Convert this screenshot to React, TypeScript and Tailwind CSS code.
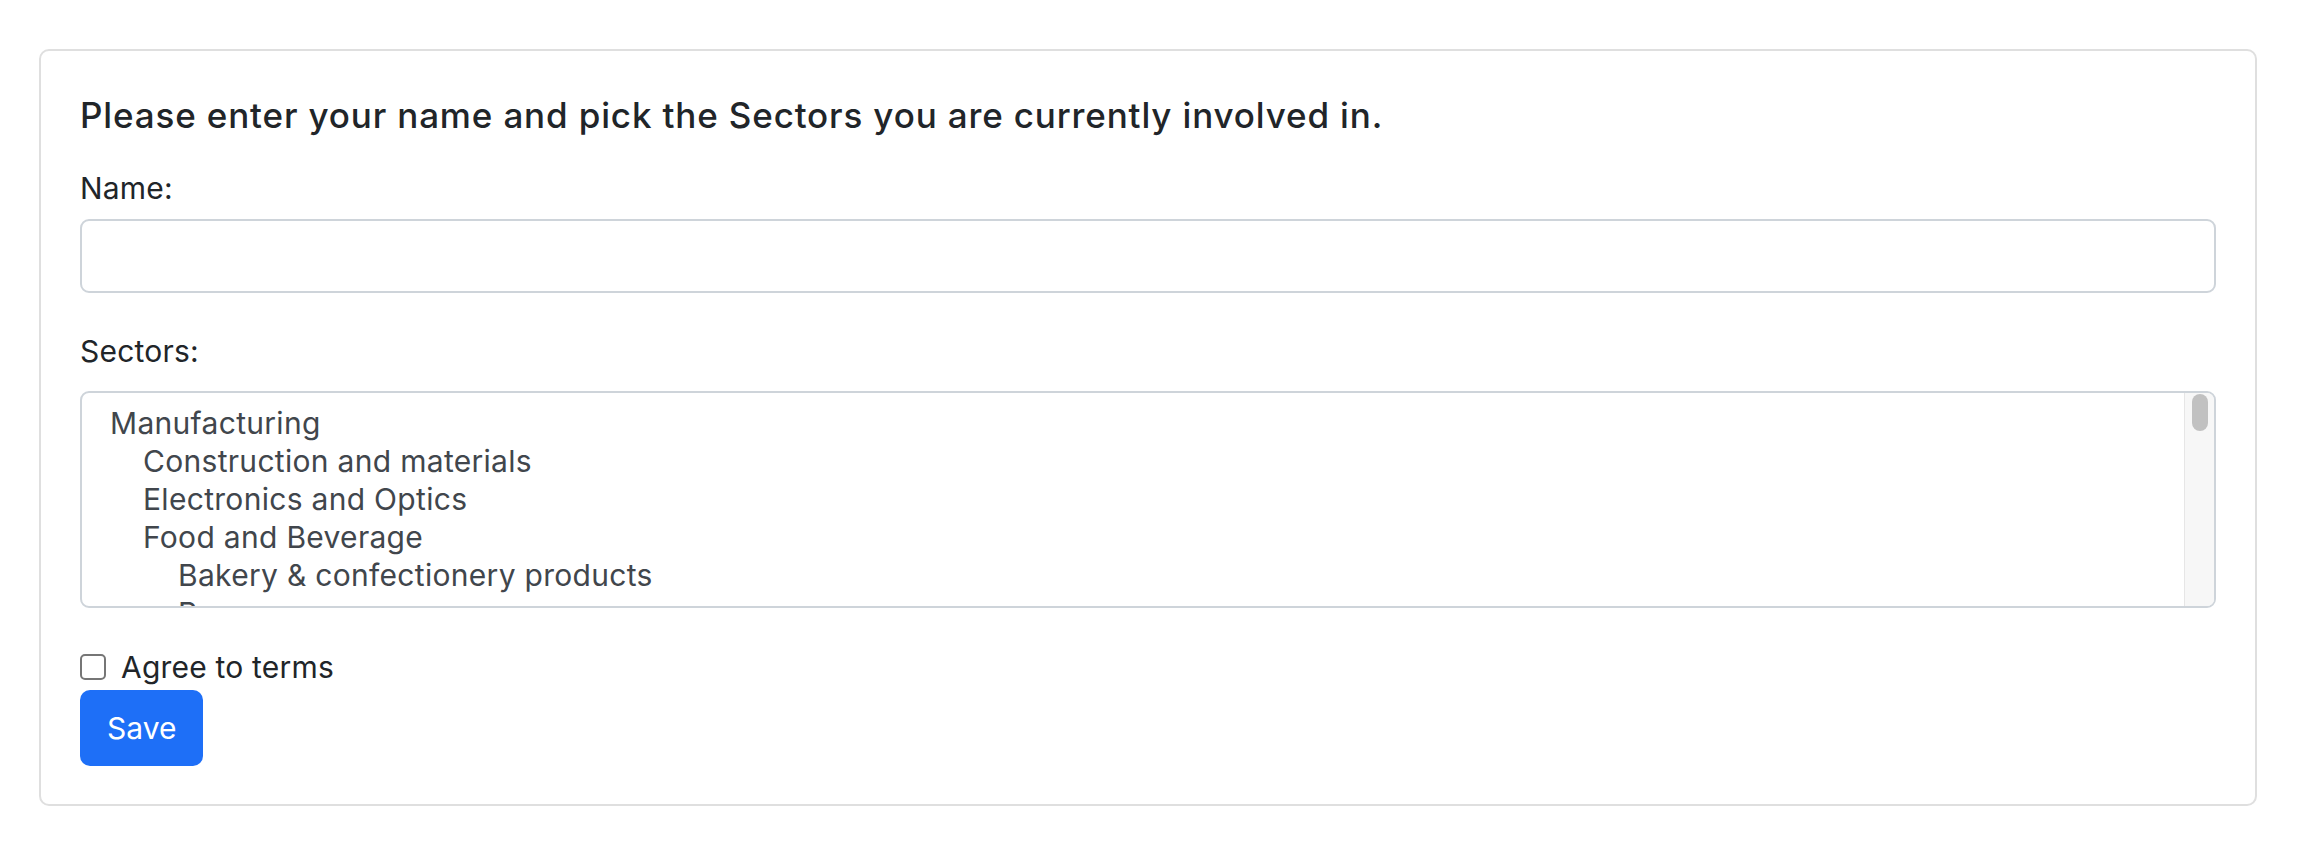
import React from "react";

const options: { label: string; level: number }[] = [
  { label: "Manufacturing", level: 0 },
  { label: "Construction and materials", level: 1 },
  { label: "Electronics and Optics", level: 1 },
  { label: "Food and Beverage", level: 1 },
  { label: "Bakery & confectionery products", level: 2 },
  { label: "Beverages", level: 2 },
  { label: "Fish & fish products", level: 2 },
];

const indent = ["pl-[28px]", "pl-[61px]", "pl-[96px]"];

export default function App() {
  return (
    <div
      className="w-[2310px] h-[866px] bg-white pt-[49px] pl-[39px] pr-[53px] text-[#212529]"
      style={{ fontFamily: "Inter, 'Noto Sans', sans-serif" }}
    >
      <div className="border-2 border-[#dfdfdf] rounded-[10px] px-[39px] pt-[43px] pb-[38px]">
        <h5 className="text-[35px] leading-[42px] font-medium tracking-[0.85px]">
          Please enter your name and pick the Sectors you are currently involved in.
        </h5>
        <label className="block mt-[34px] text-[30px] leading-[36px] tracking-[0.2px]">Name:</label>
        <div className="mt-[13px] h-[74px] border-2 border-[#ced4da] rounded-[9px] bg-white" />
        <label className="block mt-[40px] text-[30px] leading-[36px] tracking-[0.2px]">Sectors:</label>
        <div className="mt-[22px] h-[217px] border-2 border-[#ced4da] rounded-[9px] bg-white flex overflow-hidden">
          <div className="flex-1 pt-[11px] text-[30px] leading-[38px] tracking-[0.3px] text-[#41464c] overflow-hidden">
            {options.map((o) => (
              <div key={o.label} className={indent[o.level] + " whitespace-nowrap"}>
                {o.label}
              </div>
            ))}
          </div>
          <div className="w-[30px] bg-[#f7f7f7] border-l border-[#e6e6e6] pt-[1px] flex justify-center">
            <div className="w-[16px] h-[37px] rounded-full bg-[#c1c1c1]" />
          </div>
        </div>
        <div className="mt-[41px] flex items-center h-[36px]">
          <span className="block w-[26px] h-[26px] border-2 border-[#767676] rounded-[5px] bg-white" />
          <span className="ml-[15px] text-[30px] leading-[36px] tracking-[0.2px]">Agree to terms</span>
        </div>
        <button className="mt-[5px] h-[76px] px-[27px] rounded-[10px] bg-[#1e6ff7] text-white text-[30px] leading-[36px]">
          Save
        </button>
      </div>
    </div>
  );
}
